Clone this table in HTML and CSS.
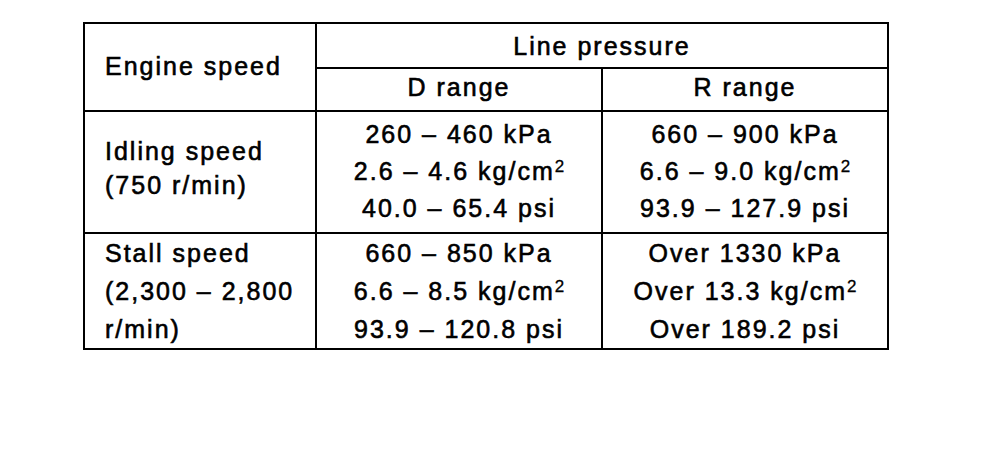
FILE: index.html
```html
<!DOCTYPE html>
<html>
  <head>
    <meta charset="utf-8">
    <title>Line pressure</title>
    <link rel="stylesheet" href="styles.css">
  </head>
  <body>

    <table class="spec">
      <colgroup><col class="c-speed"><col class="c-range"><col class="c-range"></colgroup>
      <tr class="head1">
        <th rowspan="2" class="lab">Engine speed</th>
        <th colspan="2">Line pressure</th>
      </tr>
      <tr class="head2">
        <th>D range</th>
        <th>R range</th>
      </tr>
      <tr class="idle">
        <td class="lab">Idling speed<br>(750 r/min)</td>
        <td>260 – 460 kPa<br>2.6 – 4.6 kg/cm<sup>2</sup><br>40.0 – 65.4 psi</td>
        <td>660 – 900 kPa<br>6.6 – 9.0 kg/cm<sup>2</sup><br>93.9 – 127.9 psi</td>
      </tr>
      <tr class="stall">
        <td class="lab">Stall speed<br>(2,300 – 2,800<br>r/min)</td>
        <td>660 – 850 kPa<br>6.6 – 8.5 kg/cm<sup>2</sup><br>93.9 – 120.8 psi</td>
        <td>Over 1330 kPa<br>Over 13.3 kg/cm<sup>2</sup><br>Over 189.2 psi</td>
      </tr>
    </table>

  </body>
</html>
```

FILE: styles.css
```css
body                 { margin: 0; background-color: #fff; color: #000; }

.spec                { margin: 22px 0 0 83px; width: 806px; table-layout: fixed; border-collapse: separate; border-spacing: 0;
                       border-top: 2px solid #000; border-left: 2px solid #000;
                       font-family: "Liberation Sans", Arial, sans-serif; font-size: 25px; letter-spacing: 2px;
                       -webkit-text-stroke: 0.6px #000; }

.spec col.c-speed    { width: 232px; }

.spec th,
.spec td             { box-sizing: border-box; border-right: 2px solid #000; border-bottom: 2px solid #000;
                       padding: 0; font-weight: normal; text-align: center; line-height: 30px; }

.spec .lab           { text-align: left; padding-left: 20px; }

.spec .head1         { height: 45px; }
.spec .head2         { height: 43px; }
.spec .head2 th      { padding-bottom: 5px; }
.spec .head1 .lab    { padding-bottom: 2px; }

.spec .idle          { height: 122px; }
.spec .idle td       { vertical-align: top; line-height: 37px; padding-top: 4px; }
.spec .idle td.lab   { line-height: 34px; padding-top: 22px; }

.spec .stall         { height: 116px; }
.spec .stall td      { vertical-align: top; line-height: 38px; }

.spec sup            { font-size: 17px; line-height: 0; vertical-align: 8px; letter-spacing: 0; -webkit-text-stroke: 0.3px #000; }
```
